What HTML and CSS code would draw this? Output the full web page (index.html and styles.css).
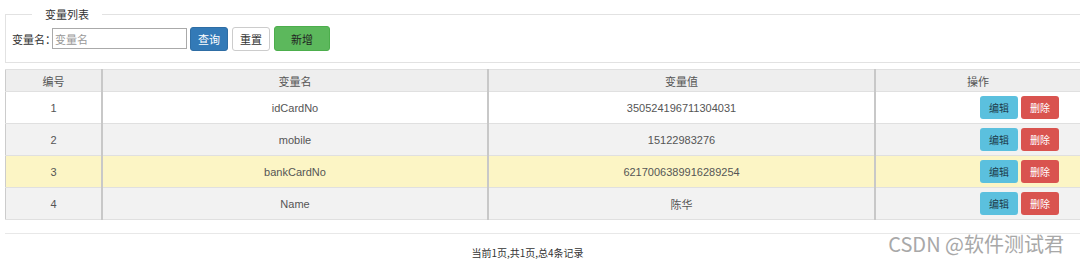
FILE: index.html
```html
<!DOCTYPE html>
<html lang="zh-CN">
<head>
    <meta charset="UTF-8">
    <title>变量列表</title>
    <link rel="stylesheet" href="styles.css">
</head>
<body>
    <fieldset class="search-box">
        <legend>变量列表</legend>
        <div class="search-row">
            <label for="varName">变量名：</label>
            <input type="text" id="varName" placeholder="变量名">
            <button class="btn btn-primary">查询</button>
            <button class="btn btn-default">重置</button>
            <button class="btn btn-success">新增</button>
        </div>
    </fieldset>

    <table class="var-table">
        <thead>
            <tr>
                <th class="col-id">编号</th>
                <th class="col-name">变量名</th>
                <th class="col-value">变量值</th>
                <th class="col-op">操作</th>
            </tr>
        </thead>
        <tbody>
            <tr>
                <td>1</td>
                <td>idCardNo</td>
                <td>350524196711304031</td>
                <td class="ops"><button class="btn-sm btn-info">编辑</button><button class="btn-sm btn-danger">删除</button></td>
            </tr>
            <tr class="even">
                <td>2</td>
                <td>mobile</td>
                <td>15122983276</td>
                <td class="ops"><button class="btn-sm btn-info">编辑</button><button class="btn-sm btn-danger">删除</button></td>
            </tr>
            <tr class="active">
                <td>3</td>
                <td>bankCardNo</td>
                <td>6217006389916289254</td>
                <td class="ops"><button class="btn-sm btn-info">编辑</button><button class="btn-sm btn-danger">删除</button></td>
            </tr>
            <tr class="even">
                <td>4</td>
                <td>Name</td>
                <td>陈华</td>
                <td class="ops"><button class="btn-sm btn-info">编辑</button><button class="btn-sm btn-danger">删除</button></td>
            </tr>
        </tbody>
    </table>

    <div class="pager">当前1页,共1页,总4条记录</div>

    <div class="watermark">CSDN @软件测试君</div>
</body>
</html>
```

FILE: styles.css
```css
body {
    font-family: "Liberation Sans", Arial, "Noto Sans CJK SC", sans-serif;
    font-size: 12px;
    color: #333;
    background-color: #fff;
    margin: 0;
    padding: 0 0 0 5px;
    overflow: hidden;
}

.search-box {
    border: 1px solid #e2e2e2;
    border-right: none;
    margin: 6px 0 0 0;
    padding: 4px 0 11px 6px;
}

.search-box legend {
    font-size: 11px;
    color: #333;
    margin-left: 20px;
    padding: 0 13px;
}

.search-row {
    display: flex;
    align-items: center;
}

.search-row label {
    font-size: 11px;
    color: #333;
    font-family: "Noto Sans CJK SC", sans-serif;
    margin-right: -4px;
}

.search-row input {
    width: 129px;
    height: 17px;
    border: 1px solid #aaa;
    padding: 1px 2px;
    font-size: 11px;
    margin-left: 0;
    font-family: "Noto Sans CJK SC", sans-serif;
}

.search-row input::placeholder {
    color: #999;
}

.btn {
    font-family: "Noto Sans CJK SC", sans-serif;
    font-size: 11px;
    height: 24px;
    border-radius: 3px;
    border: 1px solid transparent;
    cursor: pointer;
    margin-left: 3px;
}

.btn-primary {
    width: 38px;
    background-color: #337ab7;
    border-color: #2e6da4;
    color: #fff;
}

.btn-default {
    width: 38px;
    background-color: #fff;
    border-color: #ccc;
    color: #333;
    margin-left: 4px;
}

.btn-success {
    width: 56px;
    height: 25px;
    background-color: #5cb85c;
    border-color: #4cae4c;
    color: #222;
    margin-left: 4px;
}

.var-table {
    width: 1075px;
    border-collapse: collapse;
    margin-top: 6px;
    border-left: 1px solid #ccc;
}

.var-table th,
.var-table td {
    text-align: center;
    font-weight: normal;
    padding: 0;
    border-top: 1px solid #e0e0e0;
    border-right: 2px solid #c8c8c8;
}

.var-table th:last-child,
.var-table td:last-child {
    border-right: none;
}

.var-table th {
    height: 21px;
    background-color: #eee;
    color: #555;
    font-size: 11px;
    font-family: "Noto Sans CJK SC", sans-serif;
}

.var-table td {
    height: 31px;
    color: #555;
    font-size: 11px;
    background-color: #fff;
}

.var-table tbody tr:last-child td {
    border-bottom: 1px solid #e0e0e0;
}

.var-table tr.even td {
    background-color: #f2f2f2;
}

.var-table tr.active td {
    background-color: #fcf5c5;
}

.col-id { width: 95px; }
.col-name { width: 384px; }
.col-value { width: 385px; }

.var-table td.ops {
    text-align: right;
    padding-right: 21px;
}

.btn-sm {
    font-family: "Noto Sans CJK SC", sans-serif;
    font-size: 10px;
    width: 38px;
    height: 23px;
    border: none;
    border-radius: 3px;
    margin-left: 3px;
    vertical-align: middle;
    cursor: pointer;
}

.btn-info {
    background-color: #5bc0de;
    color: #1d3b4a;
}

.btn-danger {
    background-color: #d9534f;
    color: #fff;
}

.pager {
    margin-top: 13px;
    border-top: 1px solid #e8e8e8;
    padding-top: 11px;
    text-align: center;
    font-size: 10px;
    color: #333;
    font-family: "Noto Sans CJK SC", sans-serif;
    padding-right: 30px;
}

.watermark {
    position: absolute;
    right: 16px;
    top: 229px;
    white-space: nowrap;
    font-family: "Noto Sans CJK SC", sans-serif;
    font-size: 20px;
    color: #a8a8a8;
    text-shadow: 1px 1px 0 #fff;
}
```
